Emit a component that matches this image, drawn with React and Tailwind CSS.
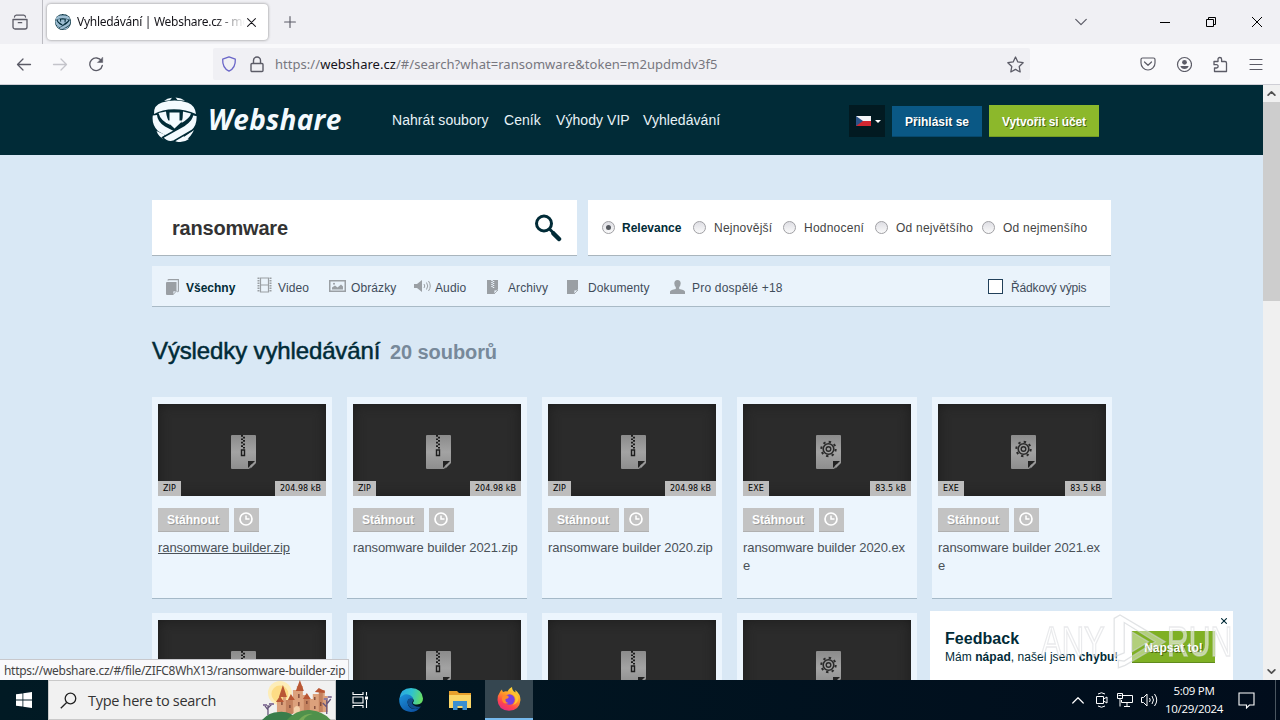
import React from "react";
import clsx from "clsx";

const navLinks = [
  { label: "Nahrát soubory", className: "w-[112px]" },
  { label: "Ceník", className: "w-[52px]" },
  { label: "Výhody VIP", className: "w-[87px]" },
  { label: "Vyhledávání", className: "w-[90px]" },
];

const sortOptions = [
  { label: "Relevance", className: "w-[91px]", active: true },
  { label: "Nejnovější", className: "w-[90px]" },
  { label: "Hodnocení", className: "w-[92px]" },
  { label: "Od největšího", className: "w-[107px]" },
  { label: "Od nejmenšího", className: "w-[110px]" },
];

const files = [
  { id: 1, name: "ransomware builder.zip", type: "ZIP", size: "204.98 kB", hover: true },
  { id: 2, name: "ransomware builder 2021.zip", type: "ZIP", size: "204.98 kB" },
  { id: 3, name: "ransomware builder 2020.zip", type: "ZIP", size: "204.98 kB" },
  { id: 4, name: "ransomware builder 2020.exe", type: "EXE", size: "83.5 kB" },
  { id: 5, name: "ransomware builder 2021.exe", type: "EXE", size: "83.5 kB" },
];

// second row is cut by the taskbar, only the thumbnails are visible
const nextFiles = [
  { id: 6, type: "ZIP" },
  { id: 7, type: "ZIP" },
  { id: 8, type: "ZIP" },
  { id: 9, type: "EXE" },
];

const Stroke = ({ className, children, box = "0 0 16 16", width = 1.2 }) => (
  <svg
    viewBox={box}
    className={clsx("shrink-0", className)}
    fill="none"
    stroke="currentColor"
    strokeWidth={width}
    strokeLinecap="round"
    strokeLinejoin="round"
  >
    {children}
  </svg>
);

const Emblem = ({ className, fg = "#f3fafe", bg = "#012b37" }) => (
  <svg viewBox="0 0 46 46" className={clsx("shrink-0", className)}>
    <path d="M12 4Q15 1.300 20 .8L18 3.300ZM23.500 .6Q29.500 1 33 3.800L25.500 3Z" fill={fg} />
    <path d="M4.500 34Q6.500 40 13 43L12.500 37.500ZM42 33Q39 39.500 34.500 42.500L32.500 39.500Z" fill={fg} />
    <path d="M6.500 16L14 14.500Q14.500 21 18.500 28Q8.500 24 6.500 16ZM31 14.500L39 16.500Q38 21 29.500 26Q31 21 31 14.500Z" fill={fg} />
    <path d="M17.500 15.500H27.500V23.500H31L22.500 31.500L14 23.500H17.500Z" fill={fg} />
    <path d="M2 17Q1.500 8 10 5.500Q23 1.500 36 5.800Q43 8.500 44 17Q34 12.300 22 12.300Q10 12.300 2 17Z" fill={fg} />
    <path d="M.8 18.500L5 18Q5.500 25 13 29.500L37 42Q31 46.500 24 44.500L6 34Q-.5 28 .8 18.500Z" fill={fg} />
    <path d="M45.300 18.500L40.500 17.500Q40.500 23 32 28.500L10.500 40.500Q16 46.500 22 44L40 33.500Q46 28.500 45.300 18.500Z" fill={fg} stroke={bg} strokeWidth="1.500" />
  </svg>
);

const TabStrip = () => (
  <div className="flex h-[44px] items-center bg-[#f0f0f4] text-[#5b5b66]">
    <div className="flex h-full w-[43px] items-center justify-center border-r border-[#bcbcc2] pr-[3px]">
      <Stroke className="h-[16px] w-[16px]" width={1.3}>
        <path d="M1 5.500h14v7.500a2 2 0 0 1-2 2H3a2 2 0 0 1-2-2zM2.500 3A2 2 0 0 1 4.300 1.200h7.400A2 2 0 0 1 13.500 3M6.300 8.700h3.400" />
      </Stroke>
    </div>
    <div className="ml-[4px] flex h-[36px] w-[221px] items-center rounded-[4px] bg-white pl-[8px] shadow-[0_0_3px_rgba(0,0,0,0.450)]">
      <span className="mr-[6px] h-[16px] w-[16px] overflow-hidden rounded-full bg-[#012b37]">
        <Emblem className="h-[16px] w-[16px]" fg="#9dbdd2" />
      </span>
      <span className="w-[168px] overflow-hidden bg-linear-to-r from-[#15141a] from-82% to-transparent bg-clip-text font-['Noto_Sans'] text-[12px] tracking-[-0.280px] whitespace-nowrap text-transparent">
        Vyhledávání | Webshare.cz - mo
      </span>
      <Stroke className="ml-[2px] h-[9px] w-[9px] text-[#15141a]" width={1.8}>
        <path d="M1 1l14 14M15 1L1 15" />
      </Stroke>
    </div>
    <Stroke className="ml-[16px] h-[12px] w-[12px]" width={1.5}>
      <path d="M8 .8v14.400M.8 8h14.400" />
    </Stroke>
    <div className="ml-auto flex items-center">
      <Stroke className="h-[12px] w-[12px]" width={1.6}>
        <path d="M1 4.500l7 7 7-7" />
      </Stroke>
      <span className="ml-[73px] h-px w-[10px] bg-black" />
      <svg viewBox="0 0 10 10" className="ml-[36px] h-[10px] w-[10px]" fill="none" stroke="#000">
        <path d="M.5 2.500h7v7h-7zM2.500 2.500v-2h7v7h-2" />
      </svg>
      <svg viewBox="0 0 10 10" className="mr-[18px] ml-[36px] h-[10px] w-[10px]" fill="none" stroke="#000">
        <path d="M0 0l10 10M10 0L0 10" />
      </svg>
    </div>
  </div>
);

const Toolbar = () => (
  <div className="flex h-[41px] items-center border-b border-[#cfcfd6] bg-[#f9f9fb] text-[#5b5b66]">
    <Stroke className="ml-[16px] h-[16px] w-[16px]" width={1.3}>
      <path d="M14.500 8.500H1.500M7 3L1.500 8.500 7 14" />
    </Stroke>
    <Stroke className="ml-[20px] h-[16px] w-[16px] text-[#c4c4ca]" width={1.3}>
      <path d="M1.500 8.500h13M9 3l5.500 5.500L9 14" />
    </Stroke>
    <Stroke className="ml-[20px] h-[16px] w-[16px]" width={1.3}>
      <path d="M13.500 5A6.300 6.300 0 1 0 14.300 9.500" />
      <path d="M14.700 1.500v5h-5z" fill="currentColor" strokeWidth=".5" />
    </Stroke>
    <div className="ml-[109px] flex h-[32px] w-[817px] items-center rounded-[2px] bg-[#f0f0f4]">
      <Stroke className="ml-[8px] h-[16px] w-[16px] text-[#6a66c8]" width={1.3}>
        <path d="M8 .8l6.300 2.400c.3 5-1 9.300-6.300 12C2.700 12.500 1.400 8.200 1.700 3.200z" />
      </Stroke>
      <Stroke className="ml-[12px] h-[17px] w-[16px]" width={1.4}>
        <path d="M3 7h10a1 1 0 0 1 1 1v6a1 1 0 0 1-1 1H3a1 1 0 0 1-1-1V8a1 1 0 0 1 1-1zM4.500 7V4a3.500 3.500 0 0 1 7 0v3" />
      </Stroke>
      <span className="mt-[2px] ml-[10px] w-[719px] font-['Noto_Sans'] text-[13px] tracking-[0.040px] whitespace-nowrap text-[#77777f]">
        https://<span className="text-[#15141a]">webshare.cz</span>/#/search?what=ransomware&amp;token=m2updmdv3f5
      </span>
      <Stroke className="ml-[13px] h-[17px] w-[17px]" width={1.2}>
        <path d="M8 .9l2.200 4.700 5 .7-3.700 3.600.9 5.100L8 12.600 3.600 15l.9-5.100L.8 6.300l5-.7z" />
      </Stroke>
    </div>
    <div className="mr-[16px] ml-auto flex items-center gap-[20px]">
      <Stroke className="h-[16px] w-[16px]" width={1.2}>
        <path d="M2.500 2h11a1.500 1.500 0 0 1 1.500 1.500V7A7 7 0 0 1 1 7V3.500A1.500 1.500 0 0 1 2.500 2zM4.500 6L8 9.300 11.500 6" />
      </Stroke>
      <Stroke className="h-[16px] w-[16px]" width={1.2}>
        <circle cx="8.500" cy="8.500" r="7" />
        <circle cx="8.500" cy="6.300" r="2.400" fill="currentColor" strokeWidth="0" />
        <path d="M4.300 10h8.400q-1 3-4.200 3t-4.200-3z" fill="currentColor" strokeWidth="0" />
      </Stroke>
      <Stroke className="h-[17px] w-[16px]" width={1.3}>
        <path d="M2 5h4V2.800a1.800 1.800 0 0 1 3.600 0V5H13a1.500 1.500 0 0 1 1.500 1.500V15H2.500v-3.500H4.500a1.500 1.500 0 0 0 0-3.300H2z" />
      </Stroke>
      <Stroke className="h-[16px] w-[16px]" width={1.2}>
        <path d="M2 3.500h12M2 8.500h12M2 13.500h12" />
      </Stroke>
    </div>
  </div>
);

const Button = ({ className, children }) => (
  <span className={clsx("flex items-center justify-center font-bold whitespace-nowrap text-white", className)}>
    {children}
  </span>
);

const SiteHeader = () => (
  <div className="flex h-[70px] items-center bg-[#012b37] pl-[152px]">
    <Emblem className="h-[46px] w-[46px]" />
    <span className="mt-[-2px] ml-[10px] w-[184px] font-['Open_Sans'] text-[28px] leading-none font-bold tracking-[0.250px] whitespace-nowrap text-[#f3fafe] italic">
      Webshare
    </span>
    <nav className="flex w-[457px] text-[14px] tracking-[0.060px] whitespace-nowrap text-[#e8f3f8]">
      {navLinks.map((link) => (
        <span key={link.label} className={link.className}>
          {link.label}
        </span>
      ))}
    </nav>
    <div className="mt-[2px] flex h-[32px] items-center">
      <div className="flex h-[32px] w-[36px] items-center bg-[#021a21] pl-[7px]">
        <svg viewBox="0 0 15 10" className="mt-[-1px] h-[10px] w-[15px]">
          <path d="M0 0h15v5H0z" fill="#f4f4f6" />
          <path d="M0 5h15v5H0z" fill="#d22630" />
          <path d="M0 0l7 5-7 5z" fill="#2c5387" />
        </svg>
        <span className="ml-[4px] border-x-[3px] border-t-[3px] border-x-transparent border-t-white" />
      </div>
      <Button className="ml-[7px] h-[31px] w-[90px] border-b border-[#07486c] bg-[#0a5885] pt-[2px] text-[12px] [text-shadow:1px_1px_0_#033049]">
        Přihlásit se
      </Button>
      <Button className="ml-[7px] h-[32px] w-[110px] border-b border-[#749a24] bg-[#8cb82b] pt-[2px] text-[12px] tracking-[-0.100px] [text-shadow:1px_1px_0_#4d6b12]">
        Vytvořit si účet
      </Button>
    </div>
  </div>
);

const SearchRow = () => (
  <div className="flex">
    <div className="flex h-[56px] w-[425px] items-center border-b border-[#a9b5bd] bg-white pl-[20px]">
      <span className="w-[363px] text-[20px] font-bold tracking-[-0.200px] text-[#333]">ransomware</span>
      <svg viewBox="0 0 28 28" className="h-[28px] w-[28px]" fill="none" stroke="#012b37">
        <circle cx="9" cy="9.500" r="7.500" strokeWidth="3" />
        <path d="M14.500 15l4 4" strokeWidth="3" />
        <path d="M18.500 19.500l5.500 5.500" strokeWidth="4.500" strokeLinecap="round" />
      </svg>
    </div>
    <div className="ml-[11px] flex h-[56px] w-[523px] items-center border-b border-[#a9b5bd] bg-white pl-[14px] text-[12px] tracking-[0.230px] whitespace-nowrap text-[#444]">
      {sortOptions.map((opt) => (
        <div key={opt.label} className={clsx("flex shrink-0 items-center", opt.className)}>
          <span
            className={clsx(
              "flex h-[13px] w-[13px] items-center justify-center rounded-full border border-[#a0a0a4] bg-linear-to-b from-[#dedee4] to-[#fafafa]",
              opt.active ? "mr-[7px]" : "mr-[8px]",
            )}
          >
            {opt.active && <span className="h-[5px] w-[5px] rounded-full bg-[#55595f]" />}
          </span>
          <span className={clsx(opt.active && "font-bold tracking-normal text-[#012b37]")}>{opt.label}</span>
        </div>
      ))}
    </div>
  </div>
);

const Filter = ({ label, className, icon, active }) => (
  <div className={clsx("flex shrink-0 items-center", className)}>
    {icon}
    <span className={clsx(active && "font-bold tracking-normal text-[#012b37]")}>{label}</span>
  </div>
);

const FilterBar = () => (
  <div className="mt-[10px] flex h-[41px] w-[958px] items-center border-b border-[#a9bac6] bg-[#eaf3fb] pt-[3px] pl-[14px] text-[12px] tracking-[0.100px] whitespace-nowrap text-[#3f4c5a]">
    <Filter
      label="Všechny"
      active
      className="w-[91px]"
      icon={
        <svg viewBox="0 0 14 16" className="mt-[-1px] mr-[6px] h-[16px] w-[14px]">
          <path d="M2 1.500Q2 .6 3 .6h9.400v11q0 1-1 1.500" fill="none" stroke="#9a9fa4" strokeWidth="1.100" />
          <path d="M0 4q0-1 1-1h9.500v9L7 16H1q-1 0-1-1z" fill="#9a9fa4" />
          <path d="M7 12h3.500L7 15.500z" fill="#eaf3fb" stroke="#9a9fa4" strokeWidth=".7" />
        </svg>
      }
    />
    <Filter
      label="Video"
      className="w-[72px]"
      icon={
        <svg viewBox="0 0 15 16" className="mt-[-5px] mr-[6px] h-[16px] w-[15px]" fill="none" stroke="#9a9fa4">
          <path d="M3.500 .5v15M11.500 .5v15M3.500 1h8M3.500 8h8M3.500 15h8" strokeWidth="1.200" />
          <path d="M1.500 .5v15M13.500 .5v15" strokeWidth="2" strokeDasharray="1.500 1" />
        </svg>
      }
    />
    <Filter
      label="Obrázky"
      className="w-[85px]"
      icon={
        <svg viewBox="0 0 17 12" className="mt-[-3px] mr-[5px] h-[12px] w-[17px]">
          <path d="M.75 .75h15.500v10.500H.75z" fill="none" stroke="#9a9fa4" strokeWidth="1.500" />
          <path d="M3 9.500V7.500l3-2 2.500 2 3.500-3 2 2v3z" fill="#9a9fa4" />
          <circle cx="5" cy="3.800" r="1" fill="#9a9fa4" />
        </svg>
      }
    />
    <Filter
      label="Audio"
      className="w-[73px]"
      icon={
        <svg viewBox="0 0 17 12" className="mt-[-3px] mr-[4px] h-[12px] w-[17px]">
          <path d="M0 4h3l5-4v12L3 8H0z" fill="#9a9fa4" />
          <path d="M10 4q1.500 2 0 4M12.500 2.500q2.500 3.500 0 7M14.500 1q3.500 5 0 10" fill="none" stroke="#9a9fa4" />
        </svg>
      }
    />
    <Filter
      label="Archivy"
      className="w-[80px]"
      icon={
        <svg viewBox="0 0 11 14" className="mt-[-2px] mr-[10px] h-[14px] w-[11px]">
          <path d="M0 0h11v9l-4.500 5H0z" fill="#9a9fa4" />
          <path d="M5 0v7" stroke="#eaf3fb" strokeWidth="1.500" strokeDasharray="1 1" />
          <path d="M6.500 1v7" stroke="#eaf3fb" strokeWidth="1.500" strokeDasharray="1 1" />
          <path d="M7 10h4l-4 4z" fill="#eaf3fb" stroke="#9a9fa4" strokeWidth=".8" />
        </svg>
      }
    />
    <Filter
      label="Dokumenty"
      className="w-[103px]"
      icon={
        <svg viewBox="0 0 11 14" className="mt-[-2px] mr-[10px] h-[14px] w-[11px]">
          <path d="M0 0h11v9l-4.500 5H0z" fill="#9a9fa4" />
          <path d="M7 10h4l-4 4z" fill="#eaf3fb" stroke="#9a9fa4" strokeWidth=".8" />
        </svg>
      }
    />
    <Filter
      label="Pro dospělé +18"
      className="w-[318px] tracking-[0.200px]"
      icon={
        <svg viewBox="0 0 15 14" className="mt-[-2px] mr-[7px] h-[14px] w-[15px]" fill="#9a9fa4">
          <path d="M7.500 0q3.200 0 3.200 3.500Q10.500 6 9.200 7v2q5 .8 5.800 2.500V14H0v-2.500Q.8 9.800 5.800 9V7Q4.500 6 4.300 3.500 4.300 0 7.500 0z" />
        </svg>
      }
    />
    <Filter
      label="Řádkový výpis"
      className="tracking-[-0.150px]"
      icon={<span className="mt-[-3px] mr-[8px] h-[15px] w-[15px] border border-[#21405a] bg-white" />}
    />
  </div>
);

const FileIcon = ({ type }) => (
  <svg viewBox="0 0 25 34" className="h-[34px] w-[25px]">
    <defs>
      <linearGradient id="sheet" x1="0" y1="0" x2="0" y2="1">
        <stop offset="0" stopColor="#8b8b8b" />
        <stop offset=".5" stopColor="#a3a3a3" />
        <stop offset="1" stopColor="#8e8e8e" />
      </linearGradient>
    </defs>
    <path d="M1 0h23a1 1 0 0 1 1 1v26l-7 7H1a1 1 0 0 1-1-1V1a1 1 0 0 1 1-1z" fill="url(#sheet)" />
    <path d="M17 26h7l-7 7z" fill="#222" />
    <path d="M19.500 33.500L25 28v-1.500q-3 3-5.500 3.500z" fill="#9a9a9a" />
    {type === "ZIP" ? (
      <g fill="none" stroke="#1d1d1d">
        <path d="M11 0v13" strokeWidth="2" strokeDasharray="1.700 1.700" />
        <path d="M13 1.700v12" strokeWidth="2" strokeDasharray="1.700 1.700" />
        <path d="M10.500 15h3v5.500h-3z" strokeWidth="1.400" />
      </g>
    ) : (
      <g fill="none" stroke="#2a2a2a">
        <circle cx="12.500" cy="14" r="5.300" strokeWidth="1.600" />
        <circle cx="12.500" cy="14" r="7.200" strokeWidth="2" strokeDasharray="2.400 3.250" />
        <circle cx="12.500" cy="14" r="2.300" strokeWidth="1.400" />
      </g>
    )}
  </svg>
);

const FileCard = ({ file }) => (
  <div className="h-[202px] w-[180px] border-b border-[#a5b9c8] bg-[#ecf5fd] px-[6px] pt-[7px]">
    <div className="relative flex h-[92px] items-center justify-center bg-[#2b2b2b] pt-[3px] pl-[2px] shadow-[inset_0_0_12px_#1c1c1c]">
      <FileIcon type={file.type} />
      {file.size && (
        <>
          <span className="absolute bottom-0 left-0 flex h-[15px] items-center bg-[#bdbdbd] px-[5px] font-['DejaVu_Sans'] text-[8px] tracking-[0.100px] text-black">
            {file.type}
          </span>
          <span className="absolute right-0 bottom-0 flex h-[15px] items-center bg-[#bdbdbd] px-[5px] font-['DejaVu_Sans'] text-[8px] tracking-[0.050px] text-black">
            {file.size}
          </span>
        </>
      )}
    </div>
    {file.name && (
      <>
        <div className="mt-[12px] flex gap-[5px]">
          <Button className="h-[24px] w-[71px] border-b border-[#b0b0b0] bg-[#c3c3c3] pt-px pr-[1px] text-[12px] [text-shadow:1px_1px_0_#999]">
            Stáhnout
          </Button>
          <span className="flex h-[24px] w-[25px] items-center justify-center border-b border-[#b0b0b0] bg-[#c3c3c3] pr-px">
            <svg viewBox="0 0 14 14" className="mt-[-1px] h-[14px] w-[14px]" fill="none" stroke="#fff">
              <circle cx="7" cy="7" r="6" strokeWidth="1.700" />
              <path d="M7 3.500V7h3.500" strokeWidth="1.500" />
            </svg>
          </span>
        </div>
        <p
          className={clsx(
            "mt-[7px] w-[168px] text-[13px] leading-[18px] tracking-[-0.080px] break-all text-[#4a5157]",
            file.hover && "underline",
          )}
        >
          {file.name}
        </p>
      </>
    )}
  </div>
);

const Scrollbar = () => (
  <div className="flex w-[17px] flex-col items-center bg-[#f0f0f0] text-[#505050]">
    <Stroke className="mt-[4px] h-[9px] w-[9px]" width={3}>
      <path d="M2 11l6-6 6 6" />
    </Stroke>
    <span className="mt-[4px] h-[199px] w-full bg-[#cdcdcd]" />
    <Stroke className="mt-auto mb-[4px] h-[9px] w-[9px]" width={3}>
      <path d="M2 5l6 6 6-6" />
    </Stroke>
  </div>
);

const Feedback = () => (
  <div className="absolute top-[611px] left-[930px] flex h-[69px] w-[303px] bg-white pl-[15px] text-[#012b37]">
    <div className="w-[187px] pt-[19px] whitespace-nowrap">
      <p className="text-[16px] leading-[18px] font-bold tracking-[0.050px]">Feedback</p>
      <p className="text-[12px] leading-[18px] tracking-[0.050px]">
        Mám <b>nápad</b>, našel jsem <b>chybu</b>!
      </p>
    </div>
    <Button className="mt-[20px] h-[32px] w-[83px] border-b border-[#5f8a1c] bg-[#7fb024] pt-[2px] text-[12px] [text-shadow:1px_1px_0_#4d6b12]">
      Napsat to!
    </Button>
    <Stroke className="mt-[7px] ml-[6px] h-[6px] w-[6px]" width={3}>
      <path d="M1.500 1.500l13 13M14.500 1.500l-13 13" />
    </Stroke>
  </div>
);

const Watermark = () => (
  <div className="absolute top-[606px] left-[1041px] flex h-[70px] w-[192px] items-center text-[43px] leading-none text-white/55 [-webkit-text-stroke:1.500px_rgba(215,217,221,0.550)]">
    <span className="w-[74px] origin-left scale-x-72">ANY</span>
    <svg
      viewBox="0 0 62 70"
      className="h-[70px] w-[52px] overflow-visible"
      fill="rgba(255,255,255,.4)"
      stroke="rgba(205,208,212,.6)"
      strokeWidth="1.500"
    >
      <path d="M-1 8l7-4 54 32-48 28-8 3v-9l7 1 37-23L11 13v36l-12 5z" />
      <path d="M20 24v24l20-12z" />
    </svg>
    <span className="w-[66px] origin-left scale-x-70">RUN</span>
  </div>
);

const Castle = () => (
  <svg viewBox="0 0 74 40" className="h-[40px] w-[74px]">
    <circle cx="19" cy="13" r="12" fill="#fdedb8" />
    <circle cx="19" cy="14" r="8.500" fill="#fddc85" />
    <path d="M16 34V20h6v-6h3v6h7V10h4V6h6v9h4v4h6v-5h7V10h5v6h3v16z" fill="#dca17c" />
    <path d="M25 20h7v14h-7zM43 19h6v14h-6zM58 12h4v20h-4z" fill="#c4825f" />
    <path d="M18 17l4-12 4 12zM35 11l4-11 4 11zM15 22l4-6 4 6zM27 20l3-6 4 6zM42 19l4-6 4 6zM54 12l4-4 6 3v2z" fill="#b95735" />
    <path d="M21 22v3M29 25v3M38 14v4M38 22v4M46 21v3M54 17v3M60 22v4M54 26v3" stroke="#7a4535" strokeWidth="1.300" />
    <path d="M33 34v-6q3-4 6 0v6z" fill="#f4d2ac" />
    <path d="M1 40Q8 32 18 32Q30 31 37 40z" fill="#397d4b" />
    <path d="M26 40Q36 29 49 30Q64 32 70 40z" fill="#4f914b" />
    <path d="M38 40q6-7 14-6-8 2-9 6z" fill="#76ab57" />
    <path d="M7 35V25m0 5l-3-4m3 2l4-4M66 34V20m0 7l-4-4m4 1l4-5" stroke="#65557a" strokeWidth="1.300" fill="none" />
    <path d="M2 25h4M8 24h5M63 19h4M67 17h4" stroke="#8e7ba0" strokeWidth="2" />
  </svg>
);

const EdgeIcon = () => (
  <svg viewBox="0 0 24 24" className="h-[24px] w-[24px]">
    <defs>
      <linearGradient id="edgeTop" x1="0" y1="0.300" x2="1" y2="0.500">
        <stop offset="0" stopColor="#2aa5e2" />
        <stop offset="0.500" stopColor="#2fc2cf" />
        <stop offset="1" stopColor="#67de62" />
      </linearGradient>
      <linearGradient id="edgeBottom" x1="0" y1="0" x2="0.800" y2="1">
        <stop offset="0" stopColor="#1c93dc" />
        <stop offset="1" stopColor="#0c4fa0" />
      </linearGradient>
    </defs>
    <path d="M.3 11Q1.500 0 12 0q11 .5 12 10.500 0 5.500-6 6-4.500 0-4-2 1.500-2 0-4Q8 4 .3 11z" fill="url(#edgeTop)" />
    <path d="M.2 11Q4 5.500 9 6.500q5 1.500 5 4.500Q9 9.500 8.500 14q.5 7.500 8 7 3.500-.5 5.500-2.500Q18 24 12 24 0 23 .2 11z" fill="url(#edgeBottom)" />
    <path d="M12.500 10.500Q8 10 8.500 14.500q1 6.500 8 6.500 3.500-.5 5.500-2.500-4 1-7-1-3-2-1-4.500 1-1.500-1.500-2.500z" fill="#124f8e" />
  </svg>
);

const FirefoxIcon = () => (
  <svg viewBox="0 0 24 24" className="h-[24px] w-[24px]">
    <defs>
      <linearGradient id="fox" x1="0.800" y1="0" x2="0.300" y2="1">
        <stop offset="0" stopColor="#ffe83b" />
        <stop offset="0.450" stopColor="#ff9329" />
        <stop offset="0.750" stopColor="#ff4350" />
        <stop offset="1" stopColor="#e52c83" />
      </linearGradient>
    </defs>
    <path d="M3 5q.5-1.500 2-2.500 0 2 1.500 2.500Q8 3.800 10.500 4.500 12 1.500 15 0q0 3.500 3.500 5.500 0-1.500-.3-2.500Q23.500 7 23.500 13q-1 10.500-11.500 10.800Q1 23 .5 13 .5 8 3 5z" fill="url(#fox)" />
    <circle cx="12.500" cy="12.500" r="5.200" fill="#7a3fe0" />
    <path d="M6 8.500q4-1.500 6 1.500-1 2-3.500 2-.5 3.500 3 4Q6 18 5 12.500 5 10 6 8.500z" fill="#ff8b2b" />
    <path d="M13 6q5 1 5.500 6 0 4-3 6 6-1.500 6-7.500Q19 5.500 13 6z" fill="#ffc52f" />
  </svg>
);

const Taskbar = () => (
  <div className="flex h-[40px] shrink-0 items-center bg-linear-to-r from-[#011a24] to-[#010d1c] font-['Open_Sans'] text-white">
    <div className="flex w-[48px] items-center justify-center">
      <svg viewBox="0 0 16 16" className="h-[16px] w-[16px]" fill="#fff">
        <path d="M0 2.300l6.500-.9v6.200H0zM7.300 1.300L16 0v7.600H7.300zM0 8.400h6.500v6.200L0 13.700zM7.300 8.400H16V16l-8.700-1.300z" />
      </svg>
    </div>
    <div className="flex h-[40px] w-[288px] items-center border border-[#c9c9c9] bg-[#f1f1f1] pl-[11px]">
      <svg viewBox="0 0 17 17" className="h-[17px] w-[17px]" fill="none" stroke="#222" strokeWidth="1.300">
        <circle cx="10.500" cy="6.500" r="5.300" />
        <path d="M6.700 10.500L.8 16.300" />
      </svg>
      <span className="ml-[11px] w-[174px] pt-[2px] text-[14.500px] tracking-[-0.280px] whitespace-nowrap text-[#333]">
        Type here to search
      </span>
      <Castle />
    </div>
    <div className="flex w-[48px] items-center justify-center">
      <svg viewBox="0 0 17 16" className="h-[16px] w-[17px]" fill="none" stroke="#fff" strokeWidth="1.100">
        <path d="M1 0v2.500h10V0M1 16v-2.500h10V16M1 5h10v6H1zM14.500 0v3.500M14.500 8v8" />
        <path d="M13 4.500h3v3h-3z" fill="#fff" stroke="none" />
      </svg>
    </div>
    <div className="flex w-[52px] items-center justify-center pr-[2px] pl-[4px]">
      <EdgeIcon />
    </div>
    <div className="flex w-[49px] items-center justify-center pr-[2px]">
      <svg viewBox="0 0 22 19" className="h-[19px] w-[22px]">
        <path d="M0 0h8l2 2h12v4H0z" fill="#e8a02c" />
        <path d="M0 4h22v13H0z" fill="#fbd667" />
        <path d="M4 19v-9h14v9h-4.500v-4h-5v4z" fill="#3b8fd0" />
      </svg>
    </div>
    <div className="flex h-[40px] w-[48px] items-center justify-center border-b-2 border-[#76b9ed] bg-[#354650]">
      <FirefoxIcon />
    </div>
    <div className="ml-auto flex items-center">
      <Stroke className="mr-[-2px] h-[12px] w-[12px]" width={1.6}>
        <path d="M1 12l7-7 7 7" />
      </Stroke>
      <svg viewBox="0 0 12 16" className="ml-[14px] h-[16px] w-[12px]" fill="none" stroke="#fff">
        <path d="M.5 4.500h7v7h-7zM7.500 7l3.500-2v6L7.500 9M2 2q3.500-2.500 7 0M2 14q3.500 2.500 7 0" />
      </svg>
      <svg viewBox="0 0 16 14" className="ml-[9px] h-[14px] w-[16px]" fill="none" stroke="#fff">
        <path d="M6 2.500h9.500v7H4.500V7M7 13.500h6M10 10v3.500M.5 .5h5v5h-5zM3 5.500v8M1.500 2.500h3" />
      </svg>
      <svg viewBox="0 0 17 14" className="ml-[8px] h-[14px] w-[17px]" fill="none" stroke="#fff">
        <path d="M.5 4.500h2L6 1v12L2.500 9.500h-2zM8.500 5q1.500 2 0 4M11 3q3 4 0 8M13.500 1q4.500 6 0 12" />
      </svg>
      <div className="ml-[6px] w-[60px] text-center text-[11.500px] leading-[18px] tracking-[-0.300px] whitespace-nowrap">
        <div>5:09 PM</div>
        <div>10/29/2024</div>
      </div>
      <svg viewBox="0 0 17 17" className="ml-[14px] h-[17px] w-[17px]" fill="none" stroke="#fff" strokeWidth="1.100">
        <path d="M1 1h15v12h-4.500L8.500 16v-3H1z" />
      </svg>
      <span className="mr-[4px] ml-[20px] h-[40px] w-px bg-[#4a5660]" />
    </div>
  </div>
);

const App = () => (
  <div className="relative flex h-[720px] w-[1280px] flex-col overflow-hidden font-['Liberation_Sans',sans-serif]">
    <TabStrip />
    <Toolbar />
    <div className="flex h-[595px] overflow-hidden">
      <main className="h-[595px] w-[1263px] overflow-hidden bg-[#d9e8f5]">
        <SiteHeader />
        <div className="pt-[45px] pl-[152px]">
          <SearchRow />
          <FilterBar />
          <div className="mt-[28px] flex h-[31px] items-baseline whitespace-nowrap">
            <h1 className="w-[238px] text-[24px] leading-[31px] tracking-[-0.130px] text-[#012b37] [-webkit-text-stroke:0.500px_#012b37]">
              Výsledky vyhledávání
            </h1>
            <span className="text-[20px] font-bold tracking-[-0.080px] text-[#77899a]">20 souborů</span>
          </div>
          <div className="mt-[31px] grid w-[960px] grid-cols-[repeat(5,180px)] gap-x-[15px] gap-y-[14px]">
            {files.map((file) => (
              <FileCard key={file.id} file={file} />
            ))}
            {nextFiles.map((file) => (
              <FileCard key={file.id} file={file} />
            ))}
          </div>
        </div>
      </main>
      <Scrollbar />
    </div>
    <Taskbar />
    <Feedback />
    <Watermark />
    <div className="absolute top-[659px] left-0 flex h-[21px] w-[349px] items-center border-t border-r border-[#c8c8cc] bg-[#f9f9fb] pt-[2px] pl-[4px] font-['Noto_Sans'] text-[12px] tracking-[-0.300px] whitespace-nowrap text-[#444]">
      https://webshare.cz/#/file/ZIFC8WhX13/ransomware-builder-zip
    </div>
  </div>
);

export default App;
